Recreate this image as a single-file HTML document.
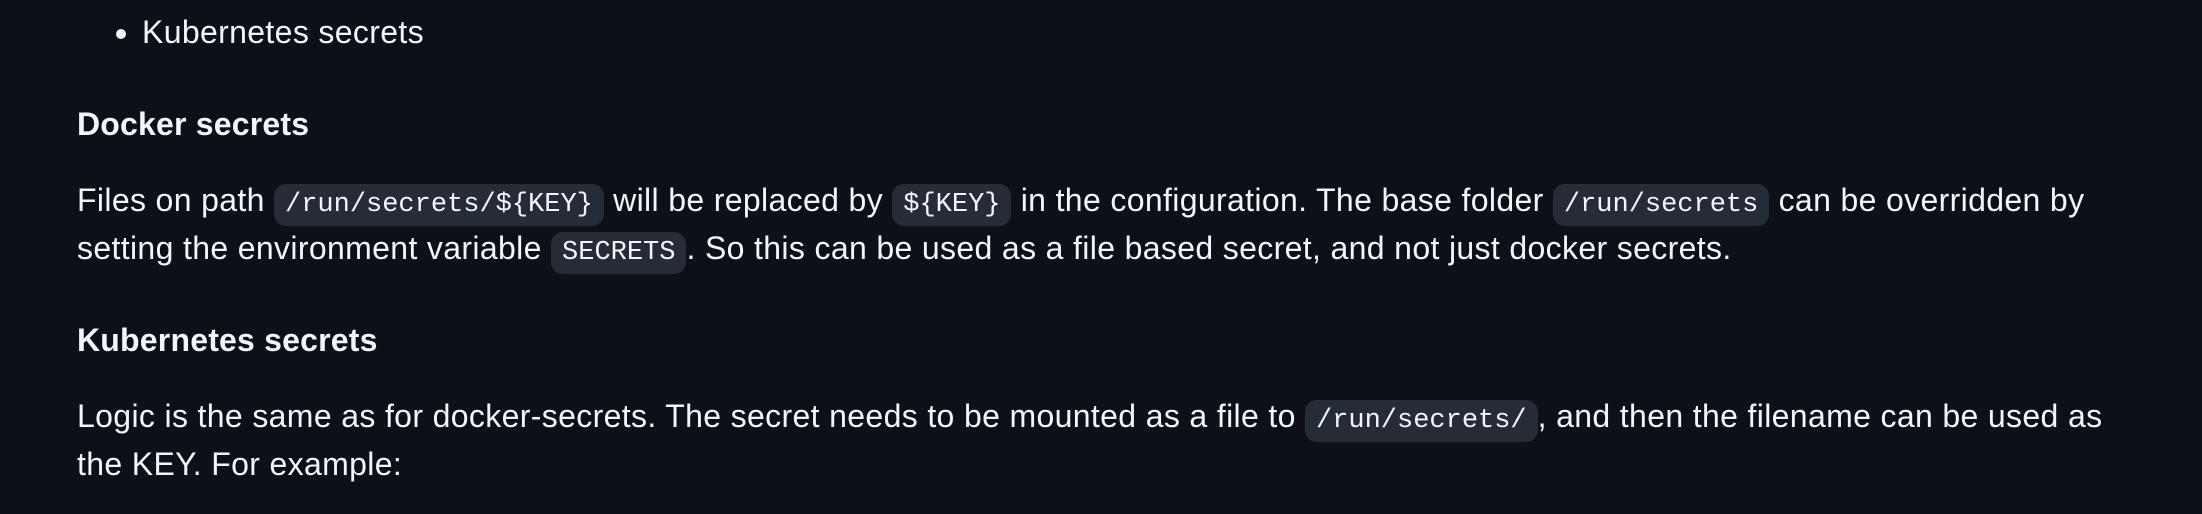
<!DOCTYPE html>
<html><head><meta charset="utf-8"><style>
html,body{margin:0;padding:0;background:#0d1117;width:2202px;height:514px;overflow:hidden}
body{color:#f0f6fc;font-family:"Liberation Sans",sans-serif;font-size:32px;line-height:48px;letter-spacing:0.35px}
.w{padding:8px 0 0 77px;width:2100px}
ul{margin:0 0 32px 0;padding-left:65px}
h4{font-size:32px;line-height:40px;font-weight:bold;margin:48px 0 32px 0;letter-spacing:0.2px}
p{margin:0 0 32px 0;white-space:nowrap}
code{font-family:"Liberation Mono",monospace;font-size:27px;letter-spacing:0;line-height:0;background:#262c36;border-radius:12px;padding:6px 11px}
</style></head><body><div class="w">
<ul><li>Kubernetes secrets</li></ul>
<h4>Docker secrets</h4>
<p>Files on path <code>/run/secrets/${KEY}</code> will be replaced by <code>${KEY}</code> in the configuration. The base folder <code>/run/secrets</code> can be overridden by<br>setting the environment variable <code>SECRETS</code>. So this can be used as a file based secret, and not just docker secrets.</p>
<h4>Kubernetes secrets</h4>
<p>Logic is the same as for docker-secrets. The secret needs to be mounted as a file to <code>/run/secrets/</code>, and then the filename can be used as<br>the KEY. For example:</p>
</div></body></html>
